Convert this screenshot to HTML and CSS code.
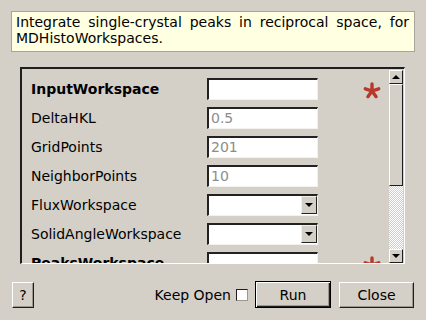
FILE: index.html
```html
<!DOCTYPE html>
<html lang="en">
<head>
    <meta charset="UTF-8">
    <title>IntegrateMDHistoWorkspace</title>
    <link rel="stylesheet" href="styles.css">
</head>
<body>
    <div class="dialog">
        <div class="desc">Integrate single-crystal peaks in reciprocal space, for MDHistoWorkspaces.</div>

        <div class="frame">
            <div class="rows">
                <div class="label bold">InputWorkspace</div>
                <div class="field"></div>
                <div class="star"><svg width="18" height="18" viewBox="0 0 18 18"><path d="M9 9V2M9 9L15.7 6.8M9 9L2.3 6.8M9 9L13.1 14.7M9 9L4.9 14.7" /></svg></div>

                <div class="label">DeltaHKL</div>
                <div class="field hint">0.5</div>
                <div></div>

                <div class="label">GridPoints</div>
                <div class="field hint">201</div>
                <div></div>

                <div class="label">NeighborPoints</div>
                <div class="field hint">10</div>
                <div></div>

                <div class="label">FluxWorkspace</div>
                <div class="field combo"><span class="drop"><i class="arrow-down"></i></span></div>
                <div></div>

                <div class="label">SolidAngleWorkspace</div>
                <div class="field combo"><span class="drop"><i class="arrow-down"></i></span></div>
                <div></div>

                <div class="label bold">PeaksWorkspace</div>
                <div class="field"></div>
                <div class="star"><svg width="18" height="18" viewBox="0 0 18 18"><path d="M9 9V2M9 9L15.7 6.8M9 9L2.3 6.8M9 9L13.1 14.7M9 9L4.9 14.7" /></svg></div>
            </div>
            <div class="scrollbar">
                <div class="sb-btn"><i class="arrow-up"></i></div>
                <div class="sb-thumb"></div>
                <div class="sb-track"></div>
                <div class="sb-btn"><i class="arrow-down"></i></div>
            </div>
        </div>

        <div class="buttons">
            <button class="btn help">?</button>
            <span class="spacer"></span>
            <label class="keep">Keep Open <span class="check"></span></label>
            <button class="btn run">Run</button>
            <button class="btn close">Close</button>
        </div>
    </div>
</body>
</html>
```
FILE: styles.css
```css
* {
    margin: 0;
    padding: 0;
    box-sizing: border-box;
}

body {
    background: #d4d0c8;
    color: #000000;
    font-family: 'DejaVu Sans', sans-serif;
    font-size: 14px;
    width: 426px;
    height: 320px;
    overflow: hidden;
}

.dialog {
    padding: 11px 11px 0 11px;
}

.desc {
    height: 41px;
    background: #ffffe1;
    border: 1px solid #a8a49c;
    padding: 2px 5px 0 4px;
    line-height: 16px;
    text-align: justify;
}

.frame {
    margin: 15px 0 0 9px;
    width: 385px;
    height: 197px;
    border-top: 2px solid #1e1e1e;
    border-left: 2px solid #1e1e1e;
    border-right: 1px solid #ffffff;
    border-bottom: 1px solid #ffffff;
    display: flex;
}

.rows {
    flex: 1;
    overflow: hidden;
    padding: 9px 0 0 9px;
    display: grid;
    grid-template-columns: 176px 111px 1fr;
    grid-auto-rows: 22px;
    row-gap: 7px;
    align-items: center;
}

.label {
    white-space: nowrap;
}

.bold {
    font-weight: bold;
}

.field {
    height: 22px;
    background: #ffffff;
    border-top: 2px solid #222222;
    border-left: 2px solid #222222;
    border-right: 1px solid #f4f2ee;
    border-bottom: 1px solid #f4f2ee;
    padding-left: 2px;
    line-height: 18px;
    position: relative;
}

.hint {
    color: #8c8c8c;
}

.drop {
    position: absolute;
    right: 0;
    top: 0;
    width: 16px;
    height: 18px;
    background: #d4d0c8;
    border-left: 1px solid #f0eee9;
    border-top: 1px solid #f0eee9;
    border-right: 1px solid #222222;
    border-bottom: 1px solid #222222;
    display: flex;
    align-items: center;
    justify-content: center;
}

.arrow-down,
.arrow-up {
    display: block;
    width: 0;
    height: 0;
    border-left: 4px solid transparent;
    border-right: 4px solid transparent;
}

.arrow-down {
    border-top: 4px solid #000000;
}

.arrow-up {
    border-bottom: 4px solid #000000;
}

.star {
    padding: 4px 0 0 45px;
    height: 22px;
    display: flex;
    align-items: center;
}

.star svg path {
    fill: none;
    stroke: #b8392b;
    stroke-width: 3.4;
    stroke-linecap: round;
}

.scrollbar {
    width: 15px;
    padding: 1px 1px 0 0;
    display: flex;
    flex-direction: column;
}

.sb-btn {
    height: 14px;
    flex: none;
    background: #d4d0c8;
    border-top: 1px solid #ffffff;
    border-left: 1px solid #ffffff;
    border-right: 1px solid #1e1e1e;
    border-bottom: 1px solid #1e1e1e;
    display: flex;
    align-items: center;
    justify-content: center;
}

.sb-thumb {
    height: 102px;
    flex: none;
    background: #d4d0c8;
    border-top: 1px solid #ffffff;
    border-left: 1px solid #ffffff;
    border-right: 1px solid #1e1e1e;
    border-bottom: 1px solid #1e1e1e;
}

.sb-track {
    flex: 1;
    background-image: conic-gradient(#ffffff 25%, #d4d0c8 0 50%, #ffffff 0 75%, #d4d0c8 0);
    background-size: 2px 2px;
}

.buttons {
    margin-top: 17px;
    padding: 0 1px 0 1px;
    display: flex;
    align-items: center;
}

.spacer {
    flex: 1;
}

.btn {
    font-family: 'DejaVu Sans', sans-serif;
    font-size: 14px;
    color: #000000;
    background: #d4d0c8;
    height: 26px;
    border-top: 1px solid #ffffff;
    border-left: 1px solid #ffffff;
    border-right: 1px solid #1e1e1e;
    border-bottom: 1px solid #1e1e1e;
    box-shadow: inset -1px -1px 0 #9c9890;
}

.help {
    width: 22px;
}

.keep {
    display: flex;
    align-items: center;
    gap: 5px;
    margin-right: 7px;
}

.check {
    width: 12px;
    height: 12px;
    background: #ffffff;
    border-top: 1px solid #1e1e1e;
    border-left: 1px solid #1e1e1e;
    border-right: 1px solid #9c9890;
    border-bottom: 1px solid #9c9890;
}

.run {
    width: 76px;
    height: 27px;
    border: 1px solid #000000;
    box-shadow: inset 1px 1px 0 #ffffff, inset -1px -1px 0 #1e1e1e, inset -2px -2px 0 #9c9890;
    margin-right: 8px;
}

.close {
    width: 75px;
}
```
